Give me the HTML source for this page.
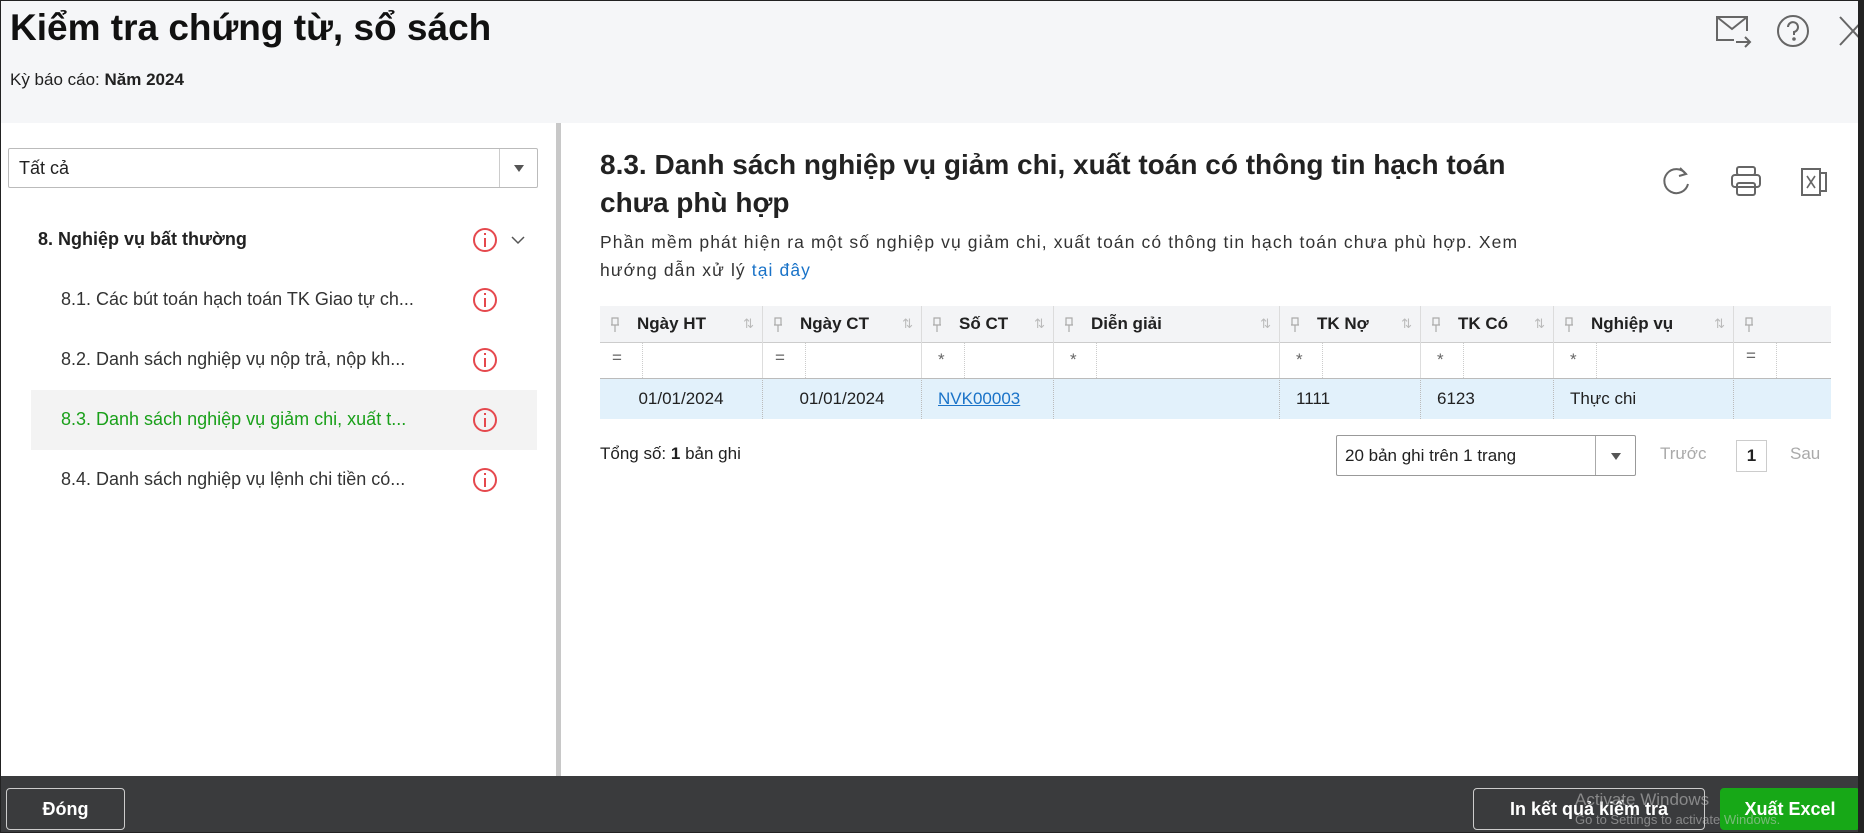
<!DOCTYPE html>
<html><head><meta charset="utf-8">
<style>
*{box-sizing:border-box;margin:0;padding:0}
body{width:1864px;height:833px;overflow:hidden;font-family:"Liberation Sans",sans-serif;color:#212121;background:#fff;position:relative}
.abs{position:absolute}
#frame{position:absolute;left:0;top:0;width:1864px;height:833px;border:1px solid #222;border-right:6px solid #222;pointer-events:none;z-index:10}
.hdr{left:0;top:0;width:1864px;height:123px;background:#f5f6f8}
.t1{left:10px;top:7px;font-size:37px;font-weight:bold;color:#111}
.t2{left:10px;top:70px;font-size:17px}
.info{width:24px;height:24px;border:2px solid #e5484d;border-radius:50%;}
.info:after{content:"";position:absolute;left:9px;top:8px;width:2px;height:9px;background:#e5484d}
.info:before{content:"";position:absolute;left:9px;top:3px;width:2px;height:2px;background:#e5484d}
.item{left:61px;font-size:18px;color:#333}
.th{top:306px;height:36px;border-right:1px solid #dcdcdc;font-weight:bold;font-size:17px;line-height:36px;background:#f3f4f6}
.fr{top:342px;height:36px;border-right:1px solid #ddd;font-size:17px;color:#666}
.dr{top:378px;height:41px;line-height:41px;font-size:17px;border-right:1px dotted #bbb}
.pin{position:absolute;left:10px;top:11px;width:10px;height:15px}
.sort{position:absolute;right:8px;top:0;color:#bbb;font-size:13px;font-weight:normal}
.btn{top:788px;height:42px;border:1px solid #ccc;border-radius:4px;color:#fff;font-weight:bold;font-size:18px;text-align:center;line-height:40px}
</style></head><body>
<svg width="0" height="0" style="position:absolute"><defs><symbol id="pn" viewBox="0 0 10 15"><path d="M2 1h6v7H2zM1 8h8M5 8v7" fill="none" stroke="#aaa" stroke-width="1.2"/></symbol></defs></svg>
<div class="abs hdr"></div>
<div class="abs t1">Kiểm tra chứng từ, sổ sách</div>
<div class="abs t2">Kỳ báo cáo: <b>Năm 2024</b></div>
<svg class="abs" style="left:1714px;top:14px" width="40" height="34" viewBox="0 0 40 34" fill="none" stroke="#666" stroke-width="2"><path d="M20 26H3V3h30v14M3 3l15 12 15-12"/><path d="M22 28h14M31 23l5 5-5 5"/></svg>
<svg class="abs" style="left:1776px;top:14px" width="34" height="34" viewBox="0 0 34 34" fill="none" stroke="#666" stroke-width="2"><circle cx="17" cy="17" r="15"/><path d="M12 13a5 5 0 1 1 6 5v3"/><circle cx="18" cy="25" r="0.8" fill="#666"/></svg>
<svg class="abs" style="left:1838px;top:14px" width="26" height="34" viewBox="0 0 26 34" fill="none" stroke="#666" stroke-width="2"><path d="M2 3l26 28M28 3L2 31"/></svg>

<div class="abs" style="left:556px;top:123px;width:5px;height:654px;background:#c8c8c8"></div>
<div class="abs" style="left:8px;top:148px;width:530px;height:40px;border:1px solid #bbb;border-radius:2px;font-size:18px;line-height:38px;padding-left:10px">Tất cả
<div class="abs" style="right:0;top:0;width:38px;height:38px;border-left:1px solid #ccc"><div class="abs" style="left:14px;top:16px;border-left:5px solid transparent;border-right:5px solid transparent;border-top:7px solid #555"></div></div></div>
<div class="abs" style="left:38px;top:229px;font-size:18px;font-weight:bold">8. Nghiệp vụ bất thường</div>
<div class="abs info" style="left:473px;top:228px"></div>
<svg class="abs" style="left:510px;top:234px" width="16" height="12"><path d="M2 3l6 6 6-6" fill="none" stroke="#555" stroke-width="1.5"/></svg>
<div class="abs" style="left:31px;top:390px;width:506px;height:60px;background:#f3f3f3"></div>
<div class="abs item" style="top:289px">8.1. Các bút toán hạch toán TK Giao tự ch...</div>
<div class="abs item" style="top:349px">8.2. Danh sách nghiệp vụ nộp trả, nộp kh...</div>
<div class="abs item" style="top:409px;color:#1aa01a">8.3. Danh sách nghiệp vụ giảm chi, xuất t...</div>
<div class="abs item" style="top:469px">8.4. Danh sách nghiệp vụ lệnh chi tiền có...</div>
<div class="abs info" style="left:473px;top:288px"></div>
<div class="abs info" style="left:473px;top:348px"></div>
<div class="abs info" style="left:473px;top:408px"></div>
<div class="abs info" style="left:473px;top:468px"></div>

<div class="abs" style="left:600px;top:146px;width:975px;font-size:28px;font-weight:bold;line-height:38px;color:#222">8.3. Danh sách nghiệp vụ giảm chi, xuất toán có thông tin hạch toán chưa phù hợp</div>
<div class="abs" style="left:600px;top:228px;white-space:nowrap;font-size:17.5px;letter-spacing:1.1px;line-height:28px;color:#333">Phần mềm phát hiện ra một số nghiệp vụ giảm chi, xuất toán có thông tin hạch toán chưa phù hợp. Xem<br>hướng dẫn xử lý <span style="color:#1a73c8">tại đây</span></div>
<svg class="abs" style="left:1660px;top:164px" width="32" height="34" viewBox="0 0 32 34" fill="none" stroke="#666" stroke-width="2"><path d="M26 10A12 12 0 1 0 28 20"/><path d="M20 4l6 6-7 2"/></svg>
<svg class="abs" style="left:1730px;top:164px" width="32" height="34" viewBox="0 0 32 34" fill="none" stroke="#666" stroke-width="2"><rect x="7" y="3" width="18" height="8" rx="2"/><rect x="2" y="11" width="28" height="12" rx="3"/><rect x="7" y="19" width="18" height="12" rx="2"/></svg>
<svg class="abs" style="left:1798px;top:166px" width="32" height="32" viewBox="0 0 32 32" fill="none" stroke="#666" stroke-width="2"><path d="M4 3h18v26H4zM22 7h6v18h-6"/><path d="M9 10l8 12M17 10l-8 12" stroke-width="1.6"/></svg>

<div class="abs" style="left:600px;top:306px;width:1231px;height:113px;border-bottom:1px solid #ccc"></div>
<div class="abs" style="left:600px;top:378px;width:1231px;height:41px;background:#e2f1fb;border-top:1px solid #bbb"></div>
<div class="abs" style="left:600px;top:342px;width:1231px;height:1px;background:#ccc"></div>
<div class="abs th" style="left:600px;width:163px"><svg class="pin"><use href="#pn"/></svg><span style="padding-left:37px">Ngày HT</span><span class="sort">⇅</span></div>
<div class="abs th" style="left:763px;width:159px"><svg class="pin"><use href="#pn"/></svg><span style="padding-left:37px">Ngày CT</span><span class="sort">⇅</span></div>
<div class="abs th" style="left:922px;width:132px"><svg class="pin"><use href="#pn"/></svg><span style="padding-left:37px">Số CT</span><span class="sort">⇅</span></div>
<div class="abs th" style="left:1054px;width:226px"><svg class="pin"><use href="#pn"/></svg><span style="padding-left:37px">Diễn giải</span><span class="sort">⇅</span></div>
<div class="abs th" style="left:1280px;width:141px"><svg class="pin"><use href="#pn"/></svg><span style="padding-left:37px">TK Nợ</span><span class="sort">⇅</span></div>
<div class="abs th" style="left:1421px;width:133px"><svg class="pin"><use href="#pn"/></svg><span style="padding-left:37px">TK Có</span><span class="sort">⇅</span></div>
<div class="abs th" style="left:1554px;width:180px"><svg class="pin"><use href="#pn"/></svg><span style="padding-left:37px">Nghiệp vụ</span><span class="sort">⇅</span></div>
<div class="abs th" style="left:1734px;width:97px;border-right:none"><svg class="pin"><use href="#pn"/></svg></div>
<div class="abs fr" style="left:600px;width:163px"><span class="abs" style="left:12px;top:6px">=</span><span class="abs" style="left:42px;top:0;height:36px;border-left:1px dotted #ccc"></span></div>
<div class="abs fr" style="left:763px;width:159px"><span class="abs" style="left:12px;top:6px">=</span><span class="abs" style="left:42px;top:0;height:36px;border-left:1px dotted #ccc"></span></div>
<div class="abs fr" style="left:922px;width:132px"><span class="abs" style="left:16px;top:8px">*</span><span class="abs" style="left:42px;top:0;height:36px;border-left:1px dotted #ccc"></span></div>
<div class="abs fr" style="left:1054px;width:226px"><span class="abs" style="left:16px;top:8px">*</span><span class="abs" style="left:42px;top:0;height:36px;border-left:1px dotted #ccc"></span></div>
<div class="abs fr" style="left:1280px;width:141px"><span class="abs" style="left:16px;top:8px">*</span><span class="abs" style="left:42px;top:0;height:36px;border-left:1px dotted #ccc"></span></div>
<div class="abs fr" style="left:1421px;width:133px"><span class="abs" style="left:16px;top:8px">*</span><span class="abs" style="left:42px;top:0;height:36px;border-left:1px dotted #ccc"></span></div>
<div class="abs fr" style="left:1554px;width:180px"><span class="abs" style="left:16px;top:8px">*</span><span class="abs" style="left:42px;top:0;height:36px;border-left:1px dotted #ccc"></span></div>
<div class="abs fr" style="left:1734px;width:97px;border-right:none"><span class="abs" style="left:12px;top:4px">=</span><span class="abs" style="left:42px;top:0;height:36px;border-left:1px dotted #ccc"></span></div>
<div class="abs dr" style="left:600px;width:163px;text-align:center">01/01/2024</div>
<div class="abs dr" style="left:763px;width:159px;text-align:center">01/01/2024</div>
<div class="abs dr" style="left:922px;width:132px;padding-left:16px;color:#1a73c8;text-decoration:underline">NVK00003</div>
<div class="abs dr" style="left:1054px;width:226px"></div>
<div class="abs dr" style="left:1280px;width:141px;padding-left:16px">1111</div>
<div class="abs dr" style="left:1421px;width:133px;padding-left:16px">6123</div>
<div class="abs dr" style="left:1554px;width:180px;padding-left:16px">Thực chi</div>

<div class="abs" style="left:600px;top:444px;font-size:17px">Tổng số: <b>1</b> bản ghi</div>
<div class="abs" style="left:1336px;top:435px;width:300px;height:41px;border:1px solid #999;border-radius:2px;font-size:17px;line-height:39px;padding-left:8px">20 bản ghi trên 1 trang
<div class="abs" style="right:0;top:0;width:40px;height:39px;border-left:1px solid #aaa"><div class="abs" style="left:15px;top:17px;border-left:5px solid transparent;border-right:5px solid transparent;border-top:7px solid #555"></div></div></div>
<div class="abs" style="left:1660px;top:444px;font-size:17px;color:#aaa">Trước</div>
<div class="abs" style="left:1736px;top:440px;width:31px;height:32px;border:1px solid #ccc;font-size:17px;font-weight:bold;text-align:center;line-height:30px">1</div>
<div class="abs" style="left:1790px;top:444px;font-size:17px;color:#aaa">Sau</div>

<div class="abs" style="left:0;top:776px;width:1864px;height:57px;background:#3a3b3d"></div>
<div class="abs btn" style="left:6px;width:119px">Đóng</div>
<div class="abs btn" style="left:1473px;width:232px">In kết quả kiểm tra</div>
<div class="abs btn" style="left:1720px;width:140px;background:#17a817;border-color:#17a817">Xuất Excel</div>
<div class="abs" style="left:1575px;top:790px;font-size:17px;color:rgba(200,200,200,.55)">Activate Windows</div>
<div class="abs" style="left:1575px;top:812px;font-size:13px;color:rgba(200,200,200,.55)">Go to Settings to activate Windows.</div>
<div id="frame"></div>
</body></html>
